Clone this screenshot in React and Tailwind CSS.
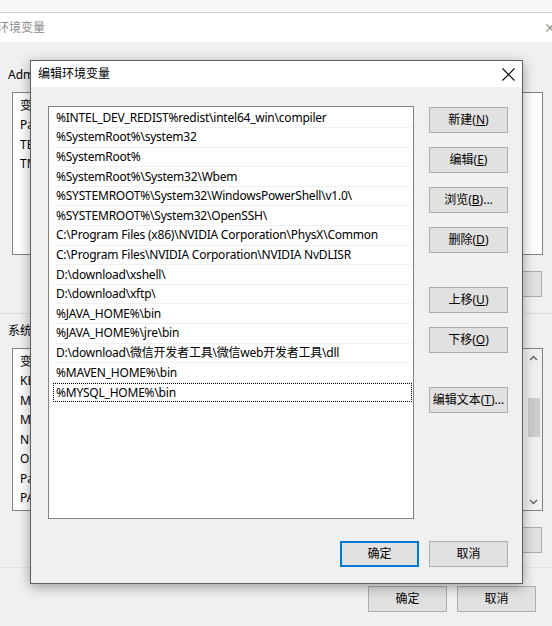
import React from "react";

const FONT = "font-['Noto_Sans','Noto_Sans_CJK_SC',sans-serif]";

function Btn({ children, def = false, className = "" }) {
  return (
    <div
      className={`h-[26px] w-[79px] flex items-center justify-center text-[12px] text-black bg-[#e1e1e1] ${
        def ? "border-2 border-[#0078d7]" : "border border-[#adadad]"
      } ${className}`}
    >
      {children}
    </div>
  );
}

function BgBtn({ children }) {
  return (
    <div className="h-[26px] w-[79px] flex items-center justify-center text-[12px] text-black bg-[#e1e1e1] border border-[#adadad]">
      {children}
    </div>
  );
}

const paths = [
  "%INTEL_DEV_REDIST%redist\\intel64_win\\compiler",
  "%SystemRoot%\\system32",
  "%SystemRoot%",
  "%SystemRoot%\\System32\\Wbem",
  "%SYSTEMROOT%\\System32\\WindowsPowerShell\\v1.0\\",
  "%SYSTEMROOT%\\System32\\OpenSSH\\",
  "C:\\Program Files (x86)\\NVIDIA Corporation\\PhysX\\Common",
  "C:\\Program Files\\NVIDIA Corporation\\NVIDIA NvDLISR",
  "D:\\download\\xshell\\",
  "D:\\download\\xftp\\",
  "%JAVA_HOME%\\bin",
  "%JAVA_HOME%\\jre\\bin",
  "D:\\download\\微信开发者工具\\微信web开发者工具\\dll",
  "%MAVEN_HOME%\\bin",
  "%MYSQL_HOME%\\bin",
];

const userVars = ["变量", "Path", "TEMP", "TMP"];
const sysVars = ["变量", "KEIL", "MAVEN", "MYSQL", "NUMBER", "OS", "Path", "PATHEXT"];

function VarRow({ name }) {
  return (
    <div className="h-[19.5px] flex items-center text-[12px] text-black pl-[7px]">
      <span className="w-[12px] overflow-hidden whitespace-nowrap">{name}</span>
    </div>
  );
}

export default function App() {
  return (
    <div className={`relative w-[552px] h-[626px] overflow-hidden bg-[#f0f0f0] ${FONT}`}>
      {/* Background window */}
      <div className="h-[13px] bg-[#f7f7f7] border-b border-[#cfcfcf]" />
      <div className="h-[29px] bg-white flex items-center justify-between">
        <span className="-ml-[3px] text-[12px] text-[#8c8c8c]">环境变量</span>
        <span className="mr-[-4px] text-[14px] text-[#9a9a9a] leading-none">✕</span>
      </div>
      <div className="pl-[12px] pr-[9px]">
        <div className="h-[50px] pt-[24px] -ml-[4px] text-[12px] leading-[17px] text-black whitespace-nowrap">
          Adm
        </div>
        <div className="h-[163px] bg-white border border-[#828282] pt-[3px]">
          {userVars.map((n) => (
            <VarRow key={n} name={n} />
          ))}
        </div>
        <div className="mt-[16px] flex justify-end pr-[1px]">
          <BgBtn>删除(<u>D</u>)</BgBtn>
        </div>
      </div>
      <div className="mt-[16px] h-px bg-[#dcdcdc]" />
      <div className="pl-[12px] pr-[9px]">
        <div className="h-[34px] -ml-[4px] flex items-center text-[12px] text-black">
          系统
        </div>
        <div className="h-[163px] bg-white border border-[#828282] flex">
          <div className="flex-1 pt-[3px]">
            {sysVars.map((n) => (
              <VarRow key={n} name={n} />
            ))}
          </div>
          <div className="w-[17px] bg-[#f0f0f0] flex flex-col items-center">
            <div className="h-[17px] flex items-center justify-center">
              <svg width="9" height="6" viewBox="0 0 9 6">
                <path d="M1 5 L4.5 1.5 L8 5" fill="none" stroke="#606060" strokeWidth="1.4" />
              </svg>
            </div>
            <div className="mt-[32px] w-[12px] h-[39px] bg-[#cdcdcd]" />
            <div className="flex-1" />
            <div className="h-[17px] flex items-center justify-center">
              <svg width="9" height="6" viewBox="0 0 9 6">
                <path d="M1 1 L4.5 4.5 L8 1" fill="none" stroke="#606060" strokeWidth="1.4" />
              </svg>
            </div>
          </div>
        </div>
        <div className="mt-[16px] flex justify-end pr-[1px]">
          <BgBtn>删除(<u>L</u>)</BgBtn>
        </div>
      </div>
      <div className="mt-[14px] h-px bg-[#e2e2e2]" />
      <div className="mt-[18px] flex justify-end gap-[10px] pr-[16px]">
        <BgBtn>确定</BgBtn>
        <BgBtn>取消</BgBtn>
      </div>

      {/* Edit dialog overlay */}
      <div className="absolute left-[30px] top-[60px] w-[493px] h-[524px] border border-[#5f5f5f] flex flex-col shadow-[0_3px_12px_rgba(0,0,0,0.35)]">
        <div className="h-[26px] bg-white flex items-center justify-between pl-[7px] pr-[7px]">
          <span className="text-[12px] text-black">编辑环境变量</span>
          <svg width="13" height="13" viewBox="0 0 13 13">
            <path d="M0.5 0.5 L12.5 12.5 M12.5 0.5 L0.5 12.5" stroke="#000" strokeWidth="1.1" />
          </svg>
        </div>
        <div className="flex-1 bg-[#f0f0f0] pt-[19px] pl-[17px] pr-[14px] flex flex-col">
          <div className="flex">
            <div className="w-[366px] h-[413px] bg-white border border-[#828282] pt-[1.5px] pl-[4px] pr-[1px]">
              {paths.map((p, i) =>
                i === paths.length - 1 ? (
                  <div
                    key={p}
                    className="h-[19.6px] flex items-center pl-[2px] text-[12px] tracking-[-0.22px] text-black border border-dotted border-black"
                  >
                    {p}
                  </div>
                ) : (
                  <div
                    key={p}
                    className="h-[19.6px] flex items-center pl-[3px] text-[12px] tracking-[-0.22px] text-black border-b border-[#f1f1f1]"
                  >
                    {p}
                  </div>
                )
              )}
            </div>
            <div className="ml-[15px] w-[79px] flex flex-col pt-[1px]">
              <Btn>新建(<u>N</u>)</Btn>
              <Btn className="mt-[14px]">编辑(<u>E</u>)</Btn>
              <Btn className="mt-[14px]">浏览(<u>B</u>)...</Btn>
              <Btn className="mt-[14px]">删除(<u>D</u>)</Btn>
              <Btn className="mt-[34px]">上移(<u>U</u>)</Btn>
              <Btn className="mt-[14px]">下移(<u>O</u>)</Btn>
              <Btn className="mt-[34px]">编辑文本(<u>T</u>)...</Btn>
            </div>
          </div>
          <div className="mt-[22px] flex justify-end gap-[10px]">
            <Btn def>确定</Btn>
            <Btn>取消</Btn>
          </div>
        </div>
      </div>
    </div>
  );
}
